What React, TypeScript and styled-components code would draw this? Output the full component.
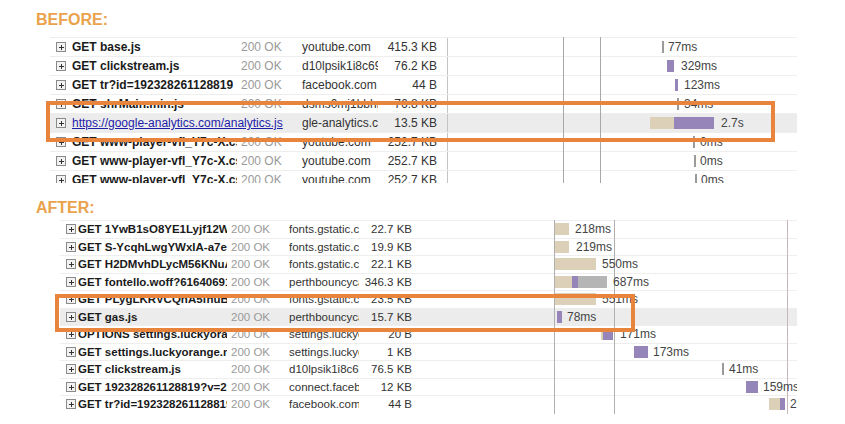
import React from "react";
import styled, { createGlobalStyle } from "styled-components";

type Bar = { l: number; w: number; c: "tan" | "purple" | "grey" | "line" };
type Row = {
  name: string;
  link?: boolean;
  status: string;
  domain: string;
  size: string;
  bars: Bar[];
  label: string;
  labelX: number;
  active?: boolean;
};

const GlobalStyle = createGlobalStyle`
  body { margin: 0; background: #fff; font-family: "Liberation Sans", Arial, sans-serif; }
`;

const colors = { tan: "#ddd0b8", purple: "#9585b9", grey: "#b5b5b5", line: "#9a9a9a" };

const before: Row[] = [
  { name: "GET base.js", status: "200 OK", domain: "youtube.com", size: "415.3 KB", bars: [{ l: 214, w: 2, c: "line" }], label: "77ms", labelX: 220 },
  { name: "GET clickstream.js", status: "200 OK", domain: "d10lpsik1i8c69.cloudfront.net", size: "76.2 KB", bars: [{ l: 219, w: 7, c: "purple" }], label: "329ms", labelX: 233 },
  { name: "GET tr?id=192328261128819", status: "200 OK", domain: "facebook.com", size: "44 B", bars: [{ l: 227, w: 3, c: "purple" }], label: "123ms", labelX: 236 },
  { name: "GET shrMain.min.js", status: "200 OK", domain: "dsms0mj1bbhn4", size: "76.8 KB", bars: [{ l: 229, w: 2, c: "line" }], label: "34ms", labelX: 236 },
  { name: "https://google-analytics.com/analytics.js", link: true, status: "", domain: "gle-analytics.com", size: "13.5 KB", bars: [{ l: 202, w: 24, c: "tan" }, { l: 226, w: 40, c: "purple" }], label: "2.7s", labelX: 273, active: true },
  { name: "GET www-player-vfl_Y7c-X.css", status: "200 OK", domain: "youtube.com", size: "252.7 KB", bars: [{ l: 245, w: 2, c: "line" }], label: "0ms", labelX: 252 },
  { name: "GET www-player-vfl_Y7c-X.css", status: "200 OK", domain: "youtube.com", size: "252.7 KB", bars: [{ l: 246, w: 2, c: "line" }], label: "0ms", labelX: 252 },
  { name: "GET www-player-vfl_Y7c-X.css", status: "200 OK", domain: "youtube.com", size: "252.7 KB", bars: [{ l: 247, w: 2, c: "line" }], label: "0ms", labelX: 253 },
];

const after: Row[] = [
  { name: "GET 1YwB1sO8YE1Lyjf12WNg", status: "200 OK", domain: "fonts.gstatic.com", size: "22.7 KB", bars: [{ l: 136, w: 15, c: "tan" }], label: "218ms", labelX: 157 },
  { name: "GET S-YcqhLwgYWxIA-a7eDp", status: "200 OK", domain: "fonts.gstatic.com", size: "19.9 KB", bars: [{ l: 136, w: 15, c: "tan" }], label: "219ms", labelX: 158 },
  { name: "GET H2DMvhDLycM56KNuAtq", status: "200 OK", domain: "fonts.gstatic.com", size: "22.1 KB", bars: [{ l: 136, w: 42, c: "tan" }], label: "550ms", labelX: 184 },
  { name: "GET fontello.woff?61640691", status: "200 OK", domain: "perthbouncycastles", size: "346.3 KB", bars: [{ l: 136, w: 18, c: "tan" }, { l: 154, w: 6, c: "purple" }, { l: 160, w: 29, c: "grey" }], label: "687ms", labelX: 195 },
  { name: "GET PLygLKRVCQnA5fhuBqk", status: "200 OK", domain: "fonts.gstatic.com", size: "23.5 KB", bars: [{ l: 136, w: 42, c: "tan" }], label: "551ms", labelX: 184 },
  { name: "GET gas.js", status: "200 OK", domain: "perthbouncycastles", size: "15.7 KB", bars: [{ l: 139, w: 5, c: "purple" }], label: "78ms", labelX: 149, active: true },
  { name: "OPTIONS settings.luckyorange", status: "200 OK", domain: "settings.luckyorange", size: "20 B", bars: [{ l: 183, w: 2, c: "tan" }, { l: 185, w: 10, c: "purple" }], label: "171ms", labelX: 202 },
  { name: "GET settings.luckyorange.net", status: "200 OK", domain: "settings.luckyorange", size: "1 KB", bars: [{ l: 216, w: 14, c: "purple" }], label: "173ms", labelX: 235 },
  { name: "GET clickstream.js", status: "200 OK", domain: "d10lpsik1i8c69.cloudfront", size: "76.5 KB", bars: [{ l: 304, w: 2, c: "line" }], label: "41ms", labelX: 311 },
  { name: "GET 192328261128819?v=2", status: "200 OK", domain: "connect.facebook.net", size: "12 KB", bars: [{ l: 328, w: 12, c: "purple" }], label: "159ms", labelX: 345 },
  { name: "GET tr?id=192328261128819", status: "200 OK", domain: "facebook.com", size: "44 B", bars: [{ l: 351, w: 11, c: "tan" }, { l: 362, w: 5, c: "purple" }], label: "2", labelX: 372 },
];

const Page = styled.div`
  width: 845px;
  height: 424px;
  overflow: hidden;
  padding-top: 11px;
  box-sizing: border-box;
`;

const Heading = styled.div<{ $mt: number }>`
  margin: ${(p) => p.$mt}px 0 0 36px;
  color: #eaa24c;
  font-size: 16px;
  font-weight: bold;
  height: 18px;
  line-height: 18px;
`;

const Panel = styled.div<{ $left: number; $height: number; $mt: number }>`
  position: relative;
  margin: ${(p) => p.$mt}px 0 0 ${(p) => p.$left}px;
  width: ${(p) => 797 - p.$left}px;
  height: ${(p) => p.$height}px;
  overflow: hidden;
`;

const RowEl = styled.div<{ $cols: string; $h: number; $active?: boolean; $fs: number }>`
  display: grid;
  grid-template-columns: ${(p) => p.$cols};
  height: ${(p) => p.$h}px;
  align-items: center;
  font-size: ${(p) => p.$fs}px;
  border-top: 1px solid #eeeeee;
  box-sizing: border-box;
  background: ${(p) => (p.$active ? "#ececec" : "transparent")};
  white-space: nowrap;
`;

const Expand = styled.span`
  width: 8px;
  height: 8px;
  margin-left: 6px;
  border: 1px solid #8a8a8a;
  background: #f2f2f2;
  position: relative;
  &::before,
  &::after {
    content: "";
    position: absolute;
    background: #333;
  }
  &::before { left: 2px; top: 4px; width: 5px; height: 1px; }
  &::after { left: 4px; top: 2px; width: 1px; height: 5px; }
`;

const Name = styled.span<{ $link?: boolean }>`
  overflow: ${(p) => (p.$link ? "visible" : "hidden")};
  padding-left: 2px;
  margin-right: 4px;
  color: ${(p) => (p.$link ? "#1d1da8" : "#1a1a1a")};
  text-decoration: ${(p) => (p.$link ? "underline" : "none")};
  font-weight: ${(p) => (p.$link ? "normal" : "bold")};
  position: relative;
  z-index: 1;
`;

const Status = styled.span`
  color: #9a9a9a;
  overflow: hidden;
`;

const Domain = styled.span`
  color: #333;
  overflow: hidden;
  margin-right: 3px;
`;

const Size = styled.span`
  color: #333;
  text-align: right;
  overflow: hidden;
`;

const Timeline = styled.div<{ $divider: boolean }>`
  position: relative;
  height: 100%;
  border-left: ${(p) => (p.$divider ? "1px solid #c4c4c4" : "none")};
`;

const BarEl = styled.span<{ $c: Bar["c"] }>`
  position: absolute;
  top: 15%;
  height: 70%;
  background: ${(p) => colors[p.$c]};
`;

const Label = styled.span`
  position: absolute;
  top: 50%;
  transform: translateY(-50%);
  color: #444;
  font-size: 12px;
  z-index: 1;
`;

const VLine = styled.div<{ $color: string }>`
  position: absolute;
  top: 0;
  bottom: 0;
  width: 1px;
  background: ${(p) => p.$color};
`;

const Highlight = styled.div`
  position: absolute;
  border: 4px solid #e8843c;
  pointer-events: none;
  z-index: 2;
`;

type TableProps = {
  rows: Row[];
  cols: string;
  rowH: number;
  fs: number;
  divider: boolean;
};

const Table: React.FC<TableProps> = ({ rows, cols, rowH, fs, divider }) => (
  <>
    {rows.map((r, i) => (
      <RowEl key={i} $cols={cols} $h={rowH} $active={r.active} $fs={fs}>
        <Expand />
        <Name $link={r.link}>{r.name}</Name>
        <Status>{r.status}</Status>
        <Domain>{r.domain}</Domain>
        <Size>{r.size}</Size>
        <span />
        <Timeline $divider={divider}>
          {r.bars.map((b, j) => (
            <BarEl key={j} $c={b.c} style={{ left: b.l, width: b.w }} />
          ))}
          <Label style={{ left: r.labelX }}>{r.label}</Label>
        </Timeline>
      </RowEl>
    ))}
  </>
);

export default function App() {
  return (
    <Page>
      <GlobalStyle />
      <Heading $mt={0}>BEFORE:</Heading>
      <Panel $left={50} $height={146} $mt={8}>
        <Table rows={before} cols="20px 171px 61px 79px 56px 10px 350px" rowH={19} fs={12} divider />
        <VLine $color="#a8a8a8" style={{ left: 513 }} />
        <VLine $color="#a8a8a8" style={{ left: 550 }} />
      </Panel>
      <Heading $mt={16}>AFTER:</Heading>
      <Panel $left={60} $height={194} $mt={3}>
        <Table rows={after} cols="16px 155px 58px 73px 50px 6px 379px" rowH={17.5} fs={11.5} divider={false} />
        <VLine $color="#b0b0b0" style={{ left: 494 }} />
        <VLine $color="#b0b0b0" style={{ left: 554 }} />
        <VLine $color="#c9b6b6" style={{ left: 727 }} />
      </Panel>
      <Highlight style={{ left: 46, top: 101, width: 721, height: 33 }} />
      <Highlight style={{ left: 55, top: 294, width: 572, height: 30 }} />
    </Page>
  );
}
